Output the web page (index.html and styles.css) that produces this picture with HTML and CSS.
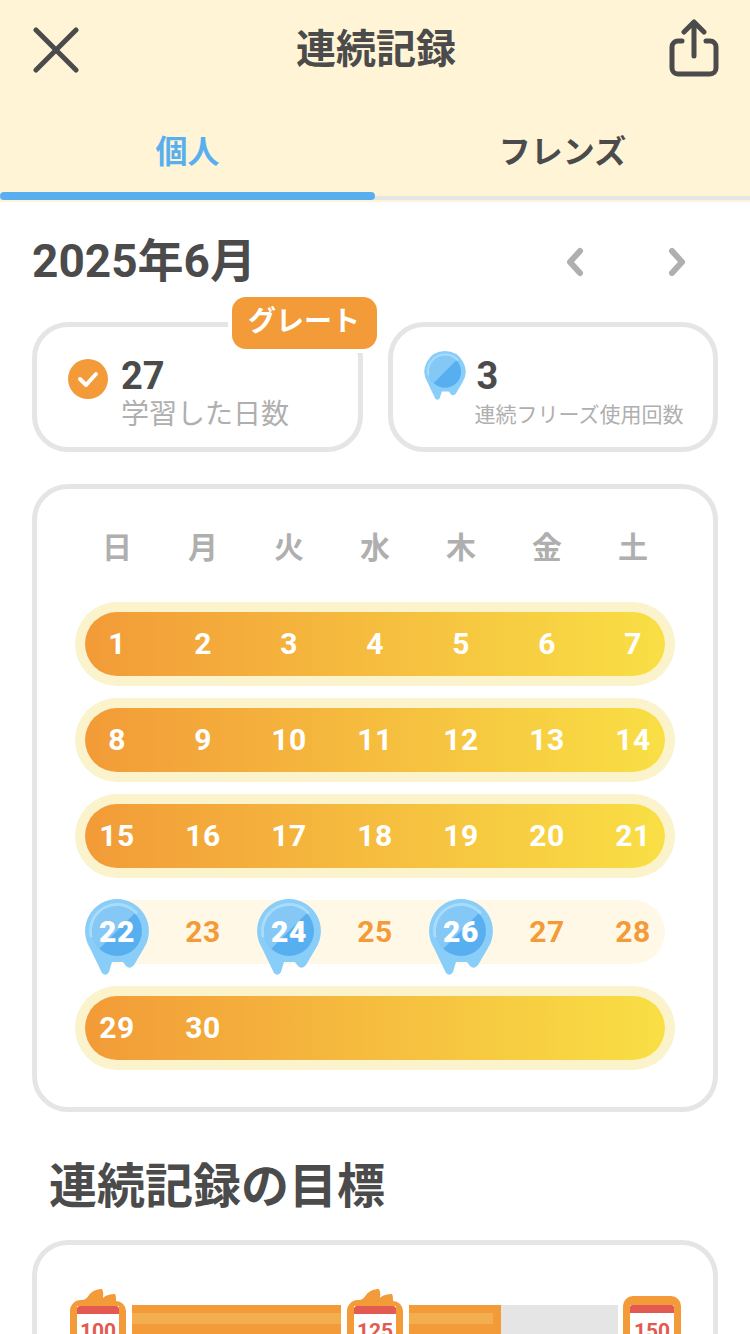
FILE: index.html
```html
<!DOCTYPE html>
<html lang="ja">
<head>
    <meta charset="UTF-8">
    <meta name="viewport" content="width=device-width, initial-scale=1.0">
    <title>連続記録</title>
    <link rel="stylesheet" href="styles.css">
</head>
<body>
    <svg class="defs" width="0" height="0">
        <symbol id="freeze" viewBox="0 0 64 76">
            <path fill="#89cdf9" d="M32 0a32 32 0 0 1 27 49L49 66q-4 5-8 1l-3-4H27l-3 10q-3 5-7 1L5 49A32 32 0 0 1 32 0z"/>
            <circle cx="32" cy="32" r="25" fill="#58aff0"/>
            <path fill="#85c8f5" d="M14.3 49.7A25 25 0 0 1 49.7 14.3z"/>
            <path fill="none" stroke="#a9dcfb" stroke-width="3" stroke-linecap="round" d="M6 37A26.5 26.5 0 0 1 51 13.500"/>
        </symbol>
    </svg>

    <header class="top">
        <div class="title-row">
            <svg class="close" width="46" height="46" viewBox="0 0 46 46"><path d="M3 3l40 40M43 3L3 43" fill="none" stroke="#4b4b4b" stroke-width="5" stroke-linecap="round"/></svg>
            <h1>連続記録</h1>
            <svg class="share" width="50" height="58" viewBox="0 0 50 58"><path d="M13 22H9a6 6 0 0 0-6 6v21a6 6 0 0 0 6 6h32a6 6 0 0 0 6-6V28a6 6 0 0 0-6-6h-4M25 37V4M15 13l10-10 10 10" fill="none" stroke="#4b4b4b" stroke-width="5" stroke-linecap="round" stroke-linejoin="round"/></svg>
        </div>
        <nav class="tabs">
            <div class="tab active">個人</div>
            <div class="tab">フレンズ</div>
        </nav>
    </header>

    <main class="content">
        <div class="month-row">
            <h2>2025年6月</h2>
            <div class="month-nav">
                <svg width="20" height="30" viewBox="0 0 20 30"><path d="M15 4L5 15l10 11" fill="none" stroke="#afafaf" stroke-width="6" stroke-linecap="round" stroke-linejoin="round"/></svg>
                <svg width="20" height="30" viewBox="0 0 20 30"><path d="M5 4l10 11L5 26" fill="none" stroke="#afafaf" stroke-width="6" stroke-linecap="round" stroke-linejoin="round"/></svg>
            </div>
        </div>

        <div class="stats">
            <div class="stat">
                <div class="badge">グレート</div>
                <svg class="stat-check" width="40" height="40" viewBox="0 0 40 40"><circle cx="20" cy="20" r="20" fill="#f29b38"/><path d="M12 20l6 6 10-11" fill="none" stroke="#fff" stroke-width="4" stroke-linecap="round" stroke-linejoin="round"/></svg>
                <div>
                    <div class="stat-num">27</div>
                    <div class="stat-label">学習した日数</div>
                </div>
            </div>
            <div class="stat">
                <svg class="stat-freeze" width="42" height="49"><use href="#freeze"/></svg>
                <div>
                    <div class="stat-num">3</div>
                    <div class="stat-label small">連続フリーズ使用回数</div>
                </div>
            </div>
        </div>

        <section class="card calendar">
            <div class="weekdays">
                <span>日</span><span>月</span><span>火</span><span>水</span><span>木</span><span>金</span><span>土</span>
            </div>
            <div class="week streak">
                <span class="day">1</span><span class="day">2</span><span class="day">3</span><span class="day">4</span><span class="day">5</span><span class="day">6</span><span class="day">7</span>
            </div>
            <div class="week streak">
                <span class="day">8</span><span class="day">9</span><span class="day">10</span><span class="day">11</span><span class="day">12</span><span class="day">13</span><span class="day">14</span>
            </div>
            <div class="week streak">
                <span class="day">15</span><span class="day">16</span><span class="day">17</span><span class="day">18</span><span class="day">19</span><span class="day">20</span><span class="day">21</span>
            </div>
            <div class="week pale">
                <span class="day frozen"><svg width="64" height="76"><use href="#freeze"/></svg><b>22</b></span>
                <span class="day">23</span>
                <span class="day frozen"><svg width="64" height="76"><use href="#freeze"/></svg><b>24</b></span>
                <span class="day">25</span>
                <span class="day frozen"><svg width="64" height="76"><use href="#freeze"/></svg><b>26</b></span>
                <span class="day">27</span><span class="day">28</span>
            </div>
            <div class="week streak">
                <span class="day">29</span><span class="day">30</span>
            </div>
        </section>

        <h2 class="goal-title">連続記録の目標</h2>

        <section class="card goals">
            <svg class="goal-icon" width="58" height="90" viewBox="0 0 58 90">
                <path fill="#f29b38" d="M1 22a11 11 0 0 1 11-11h2c3-1 4-2 6-5 3-4 8-6 13-6 2 4 1 6 1 9 3-3 7-4 12-4 1 2 1 4 1 7a10 10 0 0 1 10 10v68H1z"/>
                <rect x="8" y="17" width="42" height="73" fill="#fff"/>
                <path fill="#e25a50" d="M8 20a3 3 0 0 1 3-3h36a3 3 0 0 1 3 3v5H8z"/>
                <text x="29" y="49" class="goal-num">100</text>
            </svg>
            <div class="bar"><div class="bar-fill" style="width:100%"><div class="gloss"></div></div></div>
            <svg class="goal-icon" width="58" height="90" viewBox="0 0 58 90">
                <path fill="#f29b38" d="M1 22a11 11 0 0 1 11-11h2c3-1 4-2 6-5 3-4 8-6 13-6 2 4 1 6 1 9 3-3 7-4 12-4 1 2 1 4 1 7a10 10 0 0 1 10 10v68H1z"/>
                <rect x="8" y="17" width="42" height="73" fill="#fff"/>
                <path fill="#e25a50" d="M8 20a3 3 0 0 1 3-3h36a3 3 0 0 1 3 3v5H8z"/>
                <text x="29" y="49" class="goal-num">125</text>
            </svg>
            <div class="bar"><div class="bar-fill part" style="width:44%"><div class="gloss"></div></div></div>
            <svg class="goal-icon" width="58" height="90" viewBox="0 0 58 90">
                <path fill="#f29b38" d="M0 17A10 10 0 0 1 10 7h38a10 10 0 0 1 10 10v73H0z"/>
                <rect x="7" y="16" width="44" height="74" fill="#fff"/>
                <path fill="#e25a50" d="M7 18a2 2 0 0 1 2-2h40a2 2 0 0 1 2 2v6H7z"/>
                <text x="29" y="49" class="goal-num">150</text>
            </svg>
        </section>
    </main>
</body>
</html>
```

FILE: styles.css
```css
* {
    box-sizing: border-box;
}
html, body {
    margin: 0;
    height: 1334px;
    overflow: hidden;
}
body {
    font-family: Roboto, "Noto Sans CJK JP", sans-serif;
    color: #4b4b4b;
    background: #fff;
}
.defs {
    position: absolute;
}

/* header */
.top {
    height: 202px;
    background: #fff4d6;
}
.title-row {
    height: 100px;
    padding: 0 31px 0 33px;
    display: grid;
    grid-template-columns: 1fr auto 1fr;
    align-items: center;
}
.title-row h1 {
    margin: 0;
    font-size: 40px;
    font-weight: 700;
    line-height: 56px;
}
.share {
    justify-self: end;
    margin-bottom: 4px;
}
.tabs {
    display: flex;
    height: 100px;
    border-bottom: 4px solid #e5e5e5;
}
.tab {
    flex: 1;
    position: relative;
    text-align: center;
    font-size: 32px;
    font-weight: 700;
    line-height: 46px;
    padding-top: 29px;
}
.tab.active {
    color: #58aff0;
}
.tab.active::after {
    content: "";
    position: absolute;
    left: 0;
    right: 0;
    bottom: -4px;
    height: 8px;
    border-radius: 4px;
    background: #58aff0;
}

/* month + stats */
.content {
    padding: 0 32px;
}
.month-row {
    display: flex;
    justify-content: space-between;
    align-items: center;
    height: 60px;
    margin-top: 28px;
}
.month-row h2 {
    margin: 1px 0 0;
    font-size: 46px;
    font-weight: 700;
    line-height: 60px;
}
.month-nav {
    display: flex;
    gap: 82px;
    margin-right: 31px;
    margin-top: 4px;
}
.stats {
    display: flex;
    gap: 25px;
    margin-top: 32px;
}
.stat {
    flex: 1;
    position: relative;
    display: flex;
    height: 130px;
    padding: 24px 0 0 31px;
    border: 5px solid #e5e5e5;
    border-radius: 36px;
}
.badge {
    position: absolute;
    top: -30px;
    right: -19px;
    width: 145px;
    height: 52px;
    border-radius: 14px;
    background: #f29b38;
    box-shadow: 0 0 0 4px #fff;
    color: #fff;
    font-size: 28px;
    font-weight: 700;
    line-height: 50px;
    text-align: center;
}
.stat-check {
    margin: 8px 13px 0 0;
}
.stat-freeze {
    margin-right: 11px;
}
.stat-num {
    font-size: 38px;
    font-weight: 700;
    line-height: 50px;
}
.stat-label {
    font-size: 28px;
    line-height: 28px;
    color: #afafaf;
}
.stat-label.small {
    margin-left: -2px;
    font-size: 21px;
}

/* calendar */
.card {
    border: 5px solid #e5e5e5;
    border-radius: 36px;
}
.calendar {
    height: 628px;
    margin-top: 32px;
    padding: 37px 48px 0;
}
.weekdays {
    display: flex;
    justify-content: space-between;
    height: 48px;
    margin-bottom: 38px;
    color: #afafaf;
    font-size: 30px;
    font-weight: 700;
    line-height: 44px;
}
.weekdays span {
    width: 64px;
    text-align: center;
}
.week {
    display: flex;
    justify-content: flex-start;
    gap: 22px;
    height: 64px;
    margin-bottom: 32px;
    border-radius: 32px;
    font-size: 30px;
    font-weight: 700;
    letter-spacing: 0.5px;
}
.streak {
    color: #fff;
    background: linear-gradient(90deg, #f29b38, #f9df45);
    box-shadow: 0 0 0 10px #fbf3cc;
}
.pale {
    color: #f29b38;
    background: #fff8e6;
}
.day {
    position: relative;
    width: 64px;
    text-align: center;
    line-height: 64px;
}
.frozen {
    color: #fff;
}
.frozen svg {
    position: absolute;
    top: -1px;
    left: 0;
}
.frozen b {
    position: relative;
}

/* goals */
.goal-title {
    margin: 45px 0 0 17px;
    font-size: 48px;
    font-weight: 700;
    line-height: 60px;
}
.goals {
    display: flex;
    align-items: flex-start;
    gap: 5px;
    height: 200px;
    margin-top: 23px;
    padding: 44px 32px 0;
}
.goal-icon {
    flex: none;
}
.goal-num {
    fill: #e25a50;
    font-size: 21px;
    font-weight: 700;
    text-anchor: middle;
}
.bar {
    flex: 1;
    height: 40px;
    margin-top: 16px;
    background: #e5e5e5;
}
.bar-fill {
    height: 100%;
    padding-top: 8px;
    background: #f29b38;
}
.part {
    padding-right: 8px;
}
.gloss {
    height: 11px;
    background: #f3ae50;
}
```
